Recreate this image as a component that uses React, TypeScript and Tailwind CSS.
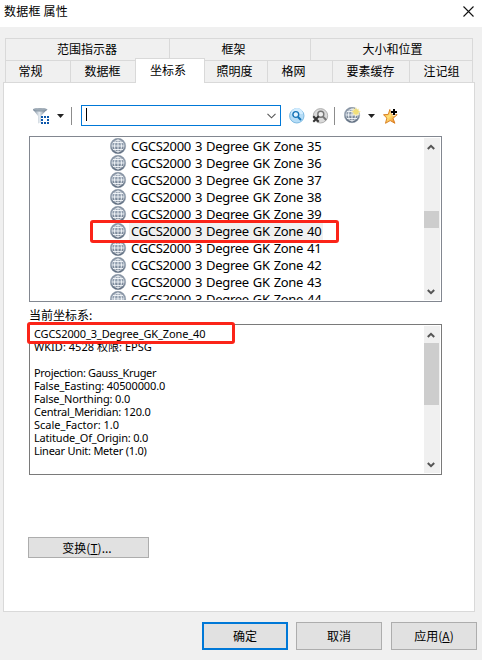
import { clsx } from 'clsx';

const zones = [35, 36, 37, 38, 39, 40, 41, 42, 43, 44];
const SELECTED_ZONE = 40;

const details = [
  { text: 'CGCS2000_3_Degree_GK_Zone_40', tracking: 'tracking-[-0.12px]' },
  { text: 'WKID: 4528 权限: EPSG', tracking: 'tracking-[0.03px]' },
  { text: '', tracking: '' },
  { text: 'Projection: Gauss_Kruger', tracking: 'tracking-[-0.33px]' },
  { text: 'False_Easting: 40500000.0', tracking: 'tracking-[-0.13px]' },
  { text: 'False_Northing: 0.0', tracking: 'tracking-[-0.16px]' },
  { text: 'Central_Meridian: 120.0', tracking: 'tracking-[-0.25px]' },
  { text: 'Scale_Factor: 1.0', tracking: 'tracking-[0px]' },
  { text: 'Latitude_Of_Origin: 0.0', tracking: 'tracking-[-0.18px]' },
  { text: 'Linear Unit: Meter (1.0)', tracking: 'tracking-[-0.25px]' },
];

const topTabs = [
  { label: '范围指示器', width: 'w-[164px] pr-px' },
  { label: '框架', width: 'w-[141px] pr-[13px]' },
  { label: '大小和位置', width: 'w-[162px] pl-[2px]' },
];

const bottomTabs = [
  { label: '常规', width: 'w-[65px]', pad: 'pr-[15px]' },
  { label: '数据框', width: 'w-[65px]', pad: 'pr-px' },
  { label: '坐标系', width: 'w-[70px]', pad: 'pr-[4px]', active: true },
  { label: '照明度', width: 'w-[63px]', pad: 'pr-[3px]' },
  { label: '格网', width: 'w-[65px]', pad: 'pr-[13px]' },
  { label: '要素缓存', width: 'w-[77px]', pad: 'pr-px' },
  { label: '注记组', width: 'w-[63px]', pad: 'pl-px' },
];

function Globe({ spark = false }: { spark?: boolean }) {
  return (
    <svg width="17" height="17" viewBox="0 0 17 17" className="shrink-0">
      <defs>
        <linearGradient id="globe" x1="0" y1="0" x2="0" y2="1">
          <stop offset="0" stopColor="#7f8c9c" />
          <stop offset="0.45" stopColor="#94a1b1" />
          <stop offset="1" stopColor="#4c5b6e" />
        </linearGradient>
      </defs>
      <circle cx="8" cy="8" r="7.7" fill="url(#globe)" stroke="#8592a2" strokeWidth="0.5" />
      <g fill="none" stroke="#f4f7fa" strokeWidth="0.9">
        <path d="M8 2v12M2 8h12M3 4.5h10M3 11.5h10" />
        <ellipse cx="8" cy="8" rx="3.5" ry="6" />
        <circle cx="8" cy="8" r="6" strokeWidth="0.7" opacity="0.7" />
      </g>
      {spark && (
        <path d="M12 .5l1 2 2-.8-.5 2 2 .8-2 1.200.5 2.200-2-.7-1 1.800-1-1.800-2 .7.6-2.100L7.500 4.500l2-.9-.5-2 2 .8z" fill="#f1df78" stroke="#fff9cf" strokeWidth="0.6" />
      )}
    </svg>
  );
}

function FilterIcon() {
  return (
    <svg width="17" height="17" viewBox="0 0 17 17">
      <defs>
        <linearGradient id="funnel">
          <stop offset="0" stopColor="#718294" />
          <stop offset="0.45" stopColor="#e6ecf1" />
          <stop offset="1" stopColor="#5f7184" />
        </linearGradient>
      </defs>
      <path d="M0 1.500L5 8v7.500l3-1V8l6-6.500z" fill="url(#funnel)" />
      <ellipse cx="7" cy="1.700" rx="7" ry="1.500" fill="#9daab6" stroke="#718292" strokeWidth="0.5" />
      <path d="M8 8h8v8H8z" fill="#fff" />
      <path d="M8 8h2v2H8zM11 8h2v2h-2zM14 8h2v2h-2zM8 11h2v2H8zM14 11h2v2h-2zM8 14h2v2H8zM11 14h2v2h-2zM14 14h2v2h-2z" fill="#0c57ab" />
    </svg>
  );
}

function SearchIcon() {
  return (
    <svg width="16" height="16" viewBox="0 0 16 16">
      <circle cx="7.800" cy="7.800" r="7.200" fill="#b5dcf6" stroke="#72b3df" strokeWidth="0.9" />
      <path d="M2 6a6 6 0 0 1 12 0z" fill="#d3edff" />
      <circle cx="6.800" cy="6.500" r="2.900" fill="#e5f5ff" stroke="#1473b7" strokeWidth="1.400" />
      <path d="M9 9l3 3" stroke="#1473b7" strokeWidth="2" />
    </svg>
  );
}

function ClearSearchIcon() {
  return (
    <svg width="17" height="16" viewBox="0 0 17 16">
      <circle cx="8.500" cy="7.800" r="7.200" fill="#dadada" stroke="#a8a8a8" strokeWidth="0.9" />
      <circle cx="8.800" cy="6.300" r="3" fill="#eee" stroke="#777" strokeWidth="1.400" />
      <path d="M11 8.600l3.200 3.400" stroke="#777" strokeWidth="2" />
      <path d="M1.300 8.300l5.400 5.400M6.700 8.300l-5.400 5.400" stroke="#333" strokeWidth="2" />
    </svg>
  );
}

function StarIcon() {
  return (
    <svg width="16" height="16" viewBox="0 0 16 16">
      <defs>
        <linearGradient id="star" x1="0" y1="0" x2="1" y2="1">
          <stop offset="0" stopColor="#f28c1c" />
          <stop offset="0.45" stopColor="#ffe278" />
          <stop offset="1" stopColor="#e96b10" />
        </linearGradient>
      </defs>
      <path d="M6.800 1.500l2 5 5.400.2-4.200 3.600 1.900 5-4.700-2.700-4.700 2.700 1.300-5.200L.5 6.700l4.800-.3z" fill="url(#star)" stroke="#d67a18" strokeWidth="0.9" />
      <path d="M9.500 1.500v-1.500h3v2.500h3v3h-3V8h-3V5.500h-2v-3h2z" fill="#fff" opacity="0.7" />
      <path d="M10 1h2v2h2v2h-2v2h-2V5H8V3h2z" fill="#000" />
    </svg>
  );
}

function Caret() {
  return (
    <svg width="7" height="4" viewBox="0 0 7 4">
      <path d="M0 0h7L3.500 4z" fill="#222" />
    </svg>
  );
}

function Arrow({ down = false }: { down?: boolean }) {
  return (
    <svg width="8" height="6" viewBox="0 0 8 6" className={clsx(down && 'rotate-180')}>
      <path d="M0.800 5L4 1.800 7.200 5" fill="none" stroke="#555" strokeWidth="2" />
    </svg>
  );
}

function Scrollbar({ thumb }: { thumb: string }) {
  return (
    <div className="flex w-4 shrink-0 flex-col bg-[#f0f0f0]">
      <div className="flex h-[17px] items-center pl-[3px]"><Arrow /></div>
      <div className="flex-1">
        <div className={clsx('w-[15px] bg-[#cdcdcd]', thumb)} />
      </div>
      <div className="flex h-[17px] items-center pl-[3px]"><Arrow down /></div>
    </div>
  );
}

export default function App() {
  return (
    <main className="flex h-[660px] w-[482px] flex-col overflow-hidden bg-[#f0f0f0] font-['Noto_Sans','Noto_Sans_CJK_SC',sans-serif] text-xs text-black">
      {/* Title bar */}
      <header className="flex h-[27px] items-start justify-between bg-white pl-1 pr-2">
        <h1 className="font-['Noto_Sans_CJK_SC',sans-serif] leading-[22px] tracking-[0.2px]">数据框 属性</h1>
        <svg width="11" height="11" viewBox="0 0 11 11" className="mt-1.5">
          <path d="M.5.500l10 10M10.500.500l-10 10" stroke="#111" strokeWidth="1.100" />
        </svg>
      </header>

      {/* Tabs */}
      <nav className="ml-[5px] mt-[11px] flex h-11 w-[468px] flex-col font-['Noto_Sans_CJK_SC',sans-serif]">
        <div className="flex h-[22px] border-l border-t border-[#d9d9d9]">
          {topTabs.map((t) => (
            <div key={t.label} className={clsx('flex shrink-0 items-center justify-center border-r border-[#d9d9d9] pb-px', t.width)}>{t.label}</div>
          ))}
        </div>
        <div className="flex h-[22px] border-l border-[#d9d9d9]">
          {bottomTabs.map((t) => (
            <div
              key={t.label}
              className={clsx(
                'flex shrink-0 items-center justify-center border-r border-t border-[#d9d9d9]',
                t.width,
                t.pad,
                t.active ? 'relative z-10 -ml-px -mt-0.5 h-[25px] border-l bg-white pb-[3px]' : 'pb-px',
              )}
            >
              {t.label}
            </div>
          ))}
        </div>
      </nav>

      {/* Tab page */}
      <section className="ml-[3px] flex h-[530px] w-[472px] flex-col border border-[#d9d9d9] bg-white pl-[25px]">
        <div className="mt-[22px] flex h-[21px] items-center">
          <div className="ml-1 mt-px"><FilterIcon /></div>
          <div className="ml-[7px]"><Caret /></div>
          <div className="ml-[7px] h-[18px] w-px bg-[#8c8c8c]" />
          <div className="ml-[9px] flex h-[21px] w-[200px] items-center justify-between border border-[#0078d7] pl-1 pr-1">
            <div className="-mt-0.5 h-[13px] w-px bg-black" />
            <svg width="9" height="6" viewBox="0 0 9 6">
              <path d="M.5.800l4 4 4-4" fill="none" stroke="#555" strokeWidth="1.100" />
            </svg>
          </div>
          <div className="ml-2"><SearchIcon /></div>
          <div className="ml-[7px]"><ClearSearchIcon /></div>
          <div className="ml-[5px] h-[18px] w-px bg-[#8c8c8c]" />
          <div className="ml-[9px]"><Globe spark /></div>
          <div className="ml-[7px]"><Caret /></div>
          <div className="ml-2"><StarIcon /></div>
        </div>

        {/* Coordinate system list */}
        <div className="relative mt-[10px] flex h-[166px] w-[413px] border border-[#828790] p-px">
          <div className="h-[162px] flex-1 overflow-hidden pl-[79px]">
            {zones.map((zone) => (
              <div key={zone} className="flex h-[17px]">
                <Globe />
                <span className={clsx('ml-[2px] w-[194px] whitespace-nowrap pl-[2px] text-[13px] leading-[17px] tracking-[-0.33px] [word-spacing:1px]', zone === SELECTED_ZONE && 'bg-[#f0f0f0]')}>
                  CGCS2000 3 Degree GK Zone {zone}
                </span>
              </div>
            ))}
          </div>
          <Scrollbar thumb="mt-14 h-[17px]" />
          <div className="absolute left-[60px] top-[83px] h-[23px] w-[249px] rounded-[3px] border-3 border-[#fb2418]" />
        </div>

        <div className="mt-[5px] h-[17px] font-['Noto_Sans_CJK_SC',sans-serif] leading-[15px]">当前坐标系:</div>

        {/* Current system details */}
        <div className="relative flex h-[151px] w-[413px] border border-[#7a7a7a] p-px">
          <div className="flex-1 pl-[3px] pt-px text-[11px] leading-[13px]">
            {details.map((d, i) => (
              <p key={i} className="h-[13px] whitespace-nowrap"><span className={d.tracking}>{d.text}</span></p>
            ))}
          </div>
          <Scrollbar thumb="h-[62px]" />
          <div className="absolute -left-[3px] -top-[3px] h-[22px] w-[208px] rounded-[3px] border-3 border-[#fb2418]" />
        </div>

        <button className="-ml-px mt-[62px] h-[21px] w-[121px] border border-[#adadad] bg-[#e1e1e1] pr-[3px] font-['Noto_Sans_CJK_SC',sans-serif] leading-[19px]">
          变换(<u>T</u>)...
        </button>
      </section>

      {/* Dialog buttons */}
      <footer className="mt-[10px] flex h-7 pl-[202px] font-['Noto_Sans_CJK_SC',sans-serif]">
        <button className="w-[86px] border-2 border-[#0078d7] bg-[#e1e1e1] pb-px">确定</button>
        <button className="ml-2 w-[86px] border border-[#adadad] bg-[#e1e1e1] pb-px">取消</button>
        <button className="ml-[9px] w-[86px] border border-[#adadad] bg-[#e1e1e1] pb-px">应用(<u>A</u>)</button>
      </footer>
    </main>
  );
}
